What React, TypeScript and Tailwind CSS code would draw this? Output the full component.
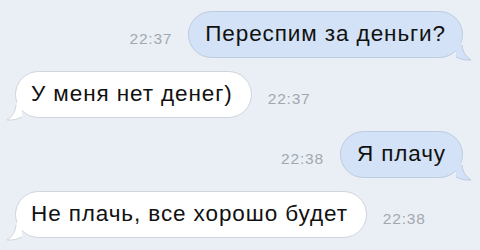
import React from 'react';

interface Message {
    text: string;
    time: string;
    out: boolean;
}

const messages: Message[] = [
    { text: 'Переспим за деньги?', time: '22:37', out: true },
    { text: 'У меня нет денег)', time: '22:37', out: false },
    { text: 'Я плачу', time: '22:38', out: true },
    { text: 'Не плачь, все хорошо будет', time: '22:38', out: false },
];

const Tail: React.FC<{ out: boolean }> = ({ out }) => {
    const fill = out ? '#d3e2f6' : '#ffffff';
    const stroke = out ? '#bccbdd' : '#cfd5dd';
    return (
        <svg
            width="20"
            height="20"
            viewBox="0 0 20 20"
            className={out ? 'absolute -right-[10px] bottom-[-4px]' : 'absolute -left-[10px] bottom-[-4px] -scale-x-100'}
        >
            <path d="M9 1 C10 8 13 15 19 19 C13 19.5 8 18 4 16 L4 1 Z" fill={fill} />
            <path d="M10 4 C10.5 10 13 15 19 19 C13 19.5 8 18 4 16" fill="none" stroke={stroke} strokeWidth="1" />
        </svg>
    );
};

const Bubble: React.FC<{ message: Message }> = ({ message }) => {
    return (
        <div
            className={
                message.out
                    ? 'relative flex h-[47px] items-center rounded-[24px] border border-[#bccbdd] bg-[#d3e2f6] pl-[16px] pr-[16px]'
                    : 'relative flex h-[47px] items-center rounded-[24px] border border-[#cfd5dd] bg-white pl-[15px] pr-[18px]'
            }
        >
            <Tail out={message.out} />
            <span className="relative text-[22.5px] leading-none text-[#111] tracking-[0.9px]">{message.text}</span>
        </div>
    );
};

const App: React.FC = () => {
    return (
        <div
            className="flex h-[250px] w-[480px] flex-col gap-[13px] overflow-hidden bg-[#eaeff6] pt-[11px] pl-[15px] pr-[17px]"
            style={{ fontFamily: '"Liberation Sans", Arial, sans-serif' }}
        >
            {messages.map((message, index) => (
                <div
                    key={index}
                    className={message.out ? 'flex items-center justify-end gap-[16px]' : 'flex items-center justify-start gap-[16px]'}
                >
                    {message.out && <span className="pt-[8px] text-[15.5px] tracking-[0.8px] text-[#a2a7ae]">{message.time}</span>}
                    <Bubble message={message} />
                    {!message.out && <span className="pt-[8px] text-[15.5px] tracking-[0.8px] text-[#a2a7ae]">{message.time}</span>}
                </div>
            ))}
        </div>
    );
};

export default App;
